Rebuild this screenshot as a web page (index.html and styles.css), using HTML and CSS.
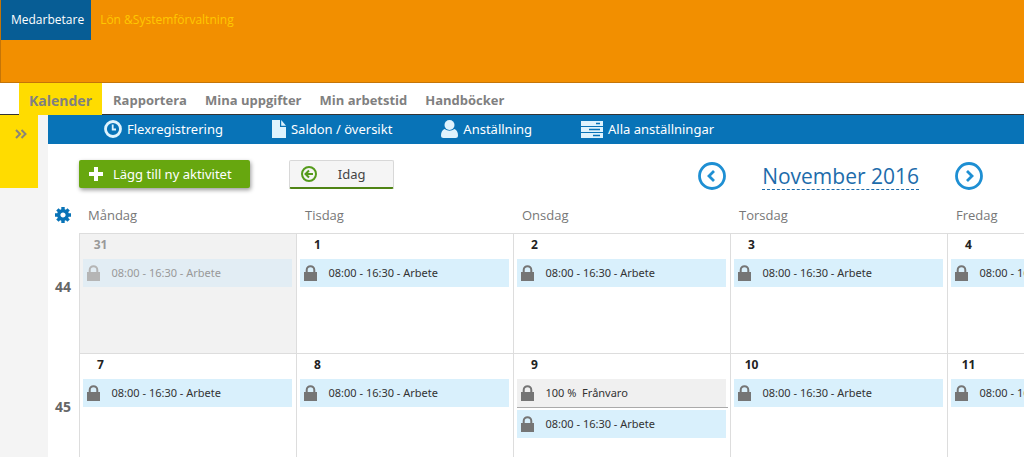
FILE: index.html
```html
<!DOCTYPE html>
<html lang="sv">
<head>
<meta charset="utf-8">
<meta name="viewport" content="width=device-width, initial-scale=1">
<title>Kalender</title>
<link rel="stylesheet" href="styles.css">
</head>
<body>
<svg class="defs" aria-hidden="true">
  <symbol id="lock" viewBox="0 0 13 16"><path d="M0 7h13v9H0z"/><path d="M2.700 8V5a3.800 3.800 0 0 1 7.600 0v3" fill="none" stroke="currentColor" stroke-width="2"/></symbol>
</svg>
<header class="top">
  <a class="role role-active" href="#">Medarbetare</a>
  <a class="role" href="#">Lön &amp;Systemförvaltning</a>
</header>
<nav class="tabs">
  <a class="tab tab-active" href="#">Kalender</a>
  <a class="tab" href="#">Rapportera</a>
  <a class="tab" href="#">Mina uppgifter</a>
  <a class="tab" href="#">Min arbetstid</a>
  <a class="tab" href="#">Handböcker</a>
</nav>
<div class="layout">
  <aside class="side"><button class="expand" type="button" aria-label="Visa panel"><svg width="12" height="10" viewBox="0 0 12 10"><path d="M1 1l4 4-4 4M6.500 1l4 4-4 4" fill="none" stroke="currentColor" stroke-width="2"/></svg></button></aside>
  <main class="main">
    <nav class="subnav">
      <a class="sub" href="#"><svg width="18" height="18" viewBox="0 0 18 18"><circle cx="9" cy="9" r="7.500" fill="none" stroke="currentColor" stroke-width="2.800"/><path d="M8.700 4.500V9.500H12" fill="none" stroke="currentColor" stroke-width="1.800"/></svg>Flexregistrering</a>
      <a class="sub" href="#"><svg width="14" height="18" viewBox="0 0 14 18"><path d="M0 0h8v7h6v11H0z"/><path d="M9.200 0L14 5.800H9.200z"/></svg>Saldon / översikt</a>
      <a class="sub" href="#"><svg width="17" height="18" viewBox="0 0 17 18"><circle cx="8.500" cy="5" r="5"/><path d="M3.500 9q5 3.500 10 0 3.500 1.500 3.500 6.500 0 2.500-2.500 2.500h-12Q0 18 0 15.500 0 10.500 3.500 9z"/></svg>Anställning</a>
      <a class="sub" href="#"><svg width="22" height="17" viewBox="0 0 22 17"><path d="M0 0h22v5H0zM0 6h22v5H0zM0 12h22v5H0z"/><path d="M15 2.500h4M8 8.500h11M12 14.500h7" stroke="#0873b7" stroke-width="1.400"/></svg>Alla anställningar</a>
    </nav>
    <div class="toolbar">
      <button class="add" type="button"><svg width="14" height="14" viewBox="0 0 14 14"><path d="M7 0v14M0 7h14" stroke="currentColor" stroke-width="4"/></svg>Lägg till ny aktivitet</button>
      <button class="today" type="button"><svg width="16" height="16" viewBox="0 0 16 16"><g fill="none" stroke="currentColor" stroke-width="2"><circle cx="8" cy="8" r="7"/><path d="M12 8H5M8 4.500L4.500 8 8 11.500"/></g></svg><span class="today-text">Idag</span></button>
      <div class="month">
        <button class="arrow" type="button" aria-label="Föregående månad"><svg width="28" height="28" viewBox="0 0 28 28"><g fill="none" stroke="currentColor" stroke-width="2.800"><circle cx="14" cy="14" r="12.500"/><path d="M16 9l-5 5 5 5"/></g></svg></button>
        <a class="month-name" href="#">November 2016</a>
        <button class="arrow" type="button" aria-label="Nästa månad"><svg width="28" height="28" viewBox="0 0 28 28"><g fill="none" stroke="currentColor" stroke-width="2.800"><circle cx="14" cy="14" r="12.500"/><path d="M12 9l5 5-5 5"/></g></svg></button>
      </div>
    </div>
    <div class="scroller">
    <table class="calendar">
      <colgroup><col class="week-col"><col class="day-col" span="5"></colgroup>
      <thead><tr>
        <th><button class="gear" type="button" aria-label="Inställningar"><svg width="16" height="16" viewBox="-8 -8 16 16"><circle r="4.300" fill="none" stroke="currentColor" stroke-width="3.400"/><path d="M0-8V-5M0 8V5M-8 0H-5M8 0H5M-5.600-5.600l2 2M5.600 5.600l-2-2M-5.600 5.600l2-2M5.600-5.600l-2 2" stroke="currentColor" stroke-width="3.400"/></svg></button></th>
        <th>Måndag</th><th>Tisdag</th><th>Onsdag</th><th>Torsdag</th><th>Fredag</th>
      </tr></thead>
      <tbody>
      <tr>
        <th class="week" scope="row">44</th>
        <td class="outside"><div class="date">31</div><div class="event"><svg class="lock"><use href="#lock"/></svg>08:00 - 16:30 - Arbete</div></td>
        <td><div class="date">1</div><div class="event"><svg class="lock"><use href="#lock"/></svg>08:00 - 16:30 - Arbete</div></td>
        <td><div class="date">2</div><div class="event"><svg class="lock"><use href="#lock"/></svg>08:00 - 16:30 - Arbete</div></td>
        <td><div class="date">3</div><div class="event"><svg class="lock"><use href="#lock"/></svg>08:00 - 16:30 - Arbete</div></td>
        <td><div class="date">4</div><div class="event"><svg class="lock"><use href="#lock"/></svg>08:00 - 16:30 - Arbete</div></td>
      </tr>
      <tr>
        <th class="week" scope="row">45</th>
        <td><div class="date">7</div><div class="event"><svg class="lock"><use href="#lock"/></svg>08:00 - 16:30 - Arbete</div></td>
        <td><div class="date">8</div><div class="event"><svg class="lock"><use href="#lock"/></svg>08:00 - 16:30 - Arbete</div></td>
        <td><div class="date">9</div><div class="absence"><div class="event event-absence"><svg class="lock"><use href="#lock"/></svg>100 %&nbsp; Frånvaro</div></div><div class="event"><svg class="lock"><use href="#lock"/></svg>08:00 - 16:30 - Arbete</div></td>
        <td><div class="date">10</div><div class="event"><svg class="lock"><use href="#lock"/></svg>08:00 - 16:30 - Arbete</div></td>
        <td><div class="date">11</div><div class="event"><svg class="lock"><use href="#lock"/></svg>08:00 - 16:30 - Arbete</div></td>
      </tr>
      </tbody>
    </table>
    </div>
  </main>
</div>
</body>
</html>
```
FILE: styles.css
```css
* { box-sizing: border-box; }
body {
  margin: 0;
  min-height: 100vh;
  display: flex;
  flex-direction: column;
  overflow: hidden;
  background: #fff;
  color: #333;
  font-family: "Noto Sans", "Open Sans", sans-serif;
  font-size: 13px;
}
a { text-decoration: none; color: inherit; }
button { border: 0; padding: 0; background: none; font: inherit; cursor: pointer; }
svg { display: block; flex: none; fill: currentColor; }
.defs { position: absolute; width: 0; height: 0; }

.top {
  display: flex;
  align-items: flex-start;
  min-height: 83px;
  background: #f28f00;
  border-left: 1px solid #c47508;
  border-bottom: 1px solid #c47508;
}
.role {
  padding: 0 9px;
  line-height: 40px;
  font-family: "Open Sans", sans-serif;
  font-size: 12px;
  color: #ffc800;
}
.role-active { padding: 0 7px 0 10px; background: #075d95; color: #fff; }

.tabs {
  display: flex;
  padding-left: 19px;
  height: 32px;
  border-bottom: 1px solid #333;
}
.tab {
  padding: 0 9px;
  line-height: 35px;
  font-family: "Open Sans", sans-serif;
  font-weight: 700;
  color: #808080;
}
.tab-active { height: 32px; margin-right: 2px; padding: 0 10px; background: #ffdc00; font-size: 14px; }

.layout { display: flex; flex: 1; }
.side { flex: none; width: 48px; background: #f4f4f4; }
.expand {
  display: flex;
  justify-content: flex-end;
  width: 38px;
  height: 73px;
  padding: 14px 11px;
  background: #ffdc00;
  color: #8a8578;
}
.main { flex: 1; min-width: 0; }

.subnav {
  display: flex;
  gap: 49px;
  height: 29px;
  padding: 0 0 1px 56px;
  background: #0873b7;
}
.sub { display: flex; align-items: center; gap: 5px; color: #fff; font-size: 13px; }
.sub svg { color: #dff3fd; }

.toolbar { display: flex; align-items: flex-start; height: 63px; padding: 16px 41px 0 31px; }
.add {
  display: flex;
  align-items: center;
  gap: 10px;
  height: 28px;
  padding: 0 18px 0 10px;
  border-radius: 2px;
  background: #67a70f;
  color: #fff;
  box-shadow: 1px 2px 4px #999;
}
.today {
  display: flex;
  align-items: center;
  width: 105px;
  height: 29px;
  margin-left: 39px;
  padding-left: 11px;
  border: 1px solid #d8d8d8;
  border-bottom: 2px solid #4f8415;
  border-radius: 2px;
  background: #f5f5f5;
  color: #559b1c;
}
.today-text { flex: 1; padding-right: 6px; color: #444; text-align: center; }
.month { display: flex; align-items: center; gap: 36px; margin-left: auto; padding-top: 2px; }
.arrow { color: #1e8fd3; }
.month-name {
  border-bottom: 1px dashed #1d6cab;
  color: #1d6cab;
  font-family: "Open Sans", sans-serif;
  font-size: 21px;
  line-height: 26px;
}

.scroller { overflow: hidden; }
.calendar { width: 1116px; border-collapse: collapse; table-layout: fixed; }
.week-col { width: 31px; }
.day-col { width: 217px; }
.calendar thead th {
  height: 25px;
  padding: 0 0 10px 9px;
  color: #777;
  font-family: "Open Sans", sans-serif;
  font-weight: 400;
  line-height: 16px;
  text-align: left;
}
.calendar thead th:first-child { padding-left: 7px; }
.gear { display: block; color: #0873b7; }
.calendar td {
  height: 120px;
  padding: 3px 4px 0 3px;
  border: 1px solid #ddd;
  vertical-align: top;
}
.calendar .week { padding: 44px 0 0 7px; vertical-align: top; font-size: 14px; line-height: 18px; color: #666; text-align: left; }
.date { width: 36px; line-height: 16px; font-size: 12px; font-weight: 700; text-align: center; color: #222; }
.event {
  display: flex;
  align-items: center;
  height: 28px;
  margin-top: 6px;
  padding: 0 0 1px 4px;
  gap: 12px;
  background: #d9f0fc;
  font-size: 11px;
  white-space: nowrap;
}
.lock { width: 13px; height: 16px; color: #757575; }
.event-absence { margin: 0 2px 0 0; background: #f0f0f0; }
.absence { margin: 6px -2px 0 0; border-bottom: 1px solid #aaa; }
.absence + .event { margin-top: 2px; }
.outside { background: #f2f2f2; }
.outside .event { background: #e2edf4; color: #999; }
.outside .lock { color: #b5b5b5; }
.outside .date { color: #999; }
```
